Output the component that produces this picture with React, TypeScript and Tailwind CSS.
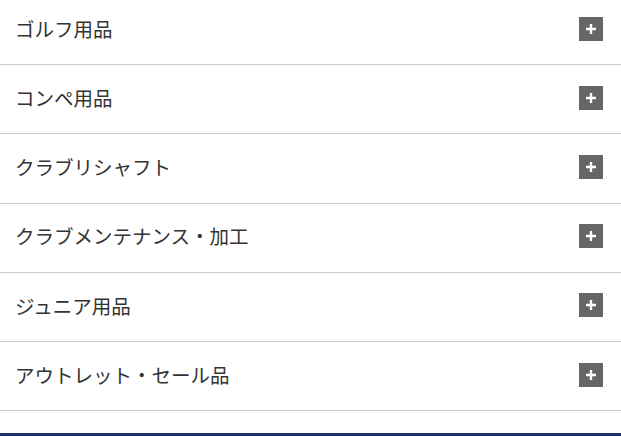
const items = [
  'ゴルフ用品',
  'コンペ用品',
  'クラブリシャフト',
  'クラブメンテナンス・加工',
  'ジュニア用品',
  'アウトレット・セール品',
];

function PlusBox() {
  return (
    <span className="flex h-6 w-6 items-center justify-center bg-[#666666]">
      <svg width="12" height="12" viewBox="0 0 12 12">
        <path d="M6 1v10M1 6h10" stroke="#ffffff" strokeWidth="2.4" />
      </svg>
    </span>
  );
}

export default function App() {
  return (
    <div className="min-h-[436px] w-full overflow-hidden bg-white font-['Noto_Sans_CJK_JP','Noto_Sans',sans-serif] text-[#333333]">
      <ul className="-mt-[4px]">
        {items.map(label => (
          <li
            key={label}
            className="flex h-[69.2px] items-center justify-between border-b border-[#cccccc] pb-[3px] pl-[15px] pr-[18px]"
          >
            <span className="text-[19.5px] leading-none">{label}</span>
            <PlusBox />
          </li>
        ))}
      </ul>
      <div className="mt-[22px] h-[4px] bg-[#1b3366]" />
    </div>
  );
}
